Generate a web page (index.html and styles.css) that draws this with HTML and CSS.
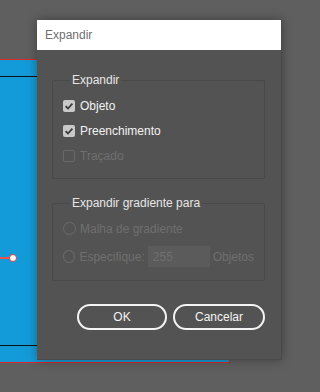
FILE: index.html
```html
<!DOCTYPE html>
<html lang="pt">
<head>
<meta charset="utf-8">
<title>Expandir</title>
<link rel="stylesheet" href="styles.css">
</head>
<body>
<div class="canvas">
  <div class="shape">
    <div class="guide guide-top"></div>
    <div class="guide guide-bottom"></div>
    <div class="path-line"></div>
    <div class="anchor"></div>
  </div>

  <div class="dialog">
    <div class="titlebar">Expandir</div>
    <div class="body">
      <fieldset class="group g1">
        <legend>Expandir</legend>
        <div class="row"><span class="cb checked"><svg viewBox="0 0 12 12" width="12" height="12"><path d="M2.6 6.2 L5 8.5 L9.4 3.6" fill="none" stroke="#3c3c3c" stroke-width="1.8"/></svg></span><span class="lbl">Objeto</span></div>
        <div class="row"><span class="cb checked"><svg viewBox="0 0 12 12" width="12" height="12"><path d="M2.6 6.2 L5 8.5 L9.4 3.6" fill="none" stroke="#3c3c3c" stroke-width="1.8"/></svg></span><span class="lbl">Preenchimento</span></div>
        <div class="row disabled"><span class="cb off"></span><span class="lbl">Traçado</span></div>
      </fieldset>

      <fieldset class="group g2">
        <legend>Expandir gradiente para</legend>
        <div class="row disabled"><span class="radio"></span><span class="lbl">Malha de gradiente</span></div>
        <div class="row disabled"><span class="radio"></span><span class="lbl">Especifique:</span><span class="field">255</span><span class="lbl unit">Objetos</span></div>
      </fieldset>

      <div class="buttons">
        <button class="btn ok">OK</button>
        <button class="btn cancel">Cancelar</button>
      </div>
    </div>
  </div>
</div>
</body>
</html>
```

FILE: styles.css
```css
* { box-sizing: border-box; }
html, body { margin: 0; padding: 0; }
body {
  width: 320px;
  height: 392px;
  overflow: hidden;
  background: #5f5f5f;
  font-family: "Liberation Sans", Arial, sans-serif;
  font-size: 12px;
}
.canvas { position: relative; width: 320px; height: 392px; }

.shape {
  position: absolute;
  left: 0;
  top: 59px;
  width: 230px;
  height: 304px;
  background: #139bd9;
  border-top: 1px solid #e0262a;
  border-bottom: 1px solid #e0262a;
  border-right: 1px solid #e0262a;
}
.guide { position: absolute; left: 0; width: 40px; height: 1px; background: #111; }
.guide-top { top: 16px; }
.guide-bottom { top: 285px; }
.path-line { position: absolute; left: 0; top: 197px; width: 12px; height: 1.5px; background: #f0504f; }
.anchor {
  position: absolute; left: 9px; top: 194px;
  width: 8px; height: 8px; border-radius: 50%;
  background: #fff; border: 1.5px solid #e8373a;
}

.dialog {
  position: absolute;
  left: 37px;
  top: 20px;
  width: 245px;
  height: 340px;
  background: #535353;
  border-right: 1px solid #4a4a4a;
  border-bottom: 1px solid #4a4a4a;
  box-shadow: 0 0 10px rgba(0,0,0,0.35);
  display: flex;
  flex-direction: column;
}
.titlebar {
  height: 30px;
  background: #fff;
  color: #707070;
  display: flex;
  align-items: center;
  padding-left: 8px;
  font-size: 12px;
}
.body {
  padding: 23px 16px 0 15px;
  display: flex;
  flex-direction: column;
}
.group {
  margin: 0;
  border: 1px solid #494949;
  border-radius: 2px;
  padding: 6px 10px 10px 10px;
  display: flex;
  flex-direction: column;
  min-width: 0;
}
.group legend {
  padding: 0 2px;
  margin-left: 7px;
  color: #e6e6e6;
  line-height: 14px;
  font-size: 12px;
}
.g2 { margin-top: 17px; padding-bottom: 11px; gap: 3px; }
.row {
  height: 25px;
  display: flex;
  align-items: center;
  color: #f2f2f2;
}
.row.disabled { color: #6f6f6f; }
.cb {
  width: 12px; height: 12px;
  border-radius: 2px;
  margin-right: 5px;
  display: flex; align-items: center; justify-content: center;
}
.cb.checked { background: #c9c9c9; }
.cb.off { border: 1px solid #6a6a6a; }
.radio {
  width: 13px; height: 13px;
  border: 1.5px solid #6a6a6a;
  border-radius: 50%;
  margin-right: 4px;
}
.field {
  width: 65px;
  height: 21px;
  background: #5b5b5b;
  color: #6f6f6f;
  margin-left: 3px;
  padding-left: 5px;
  display: flex;
  align-items: center;
}
.unit { margin-left: 3px; }

.buttons {
  margin-top: 23px;
  display: flex;
  justify-content: flex-end;
  gap: 6px;
}
.btn {
  height: 26px;
  border: 2px solid #f4f4f4;
  border-radius: 13px;
  background: transparent;
  color: #f4f4f4;
  font-family: "Liberation Sans", Arial, sans-serif;
  font-size: 12px;
  padding: 0;
}
.ok { width: 90px; }
.cancel { width: 92px; }
```
